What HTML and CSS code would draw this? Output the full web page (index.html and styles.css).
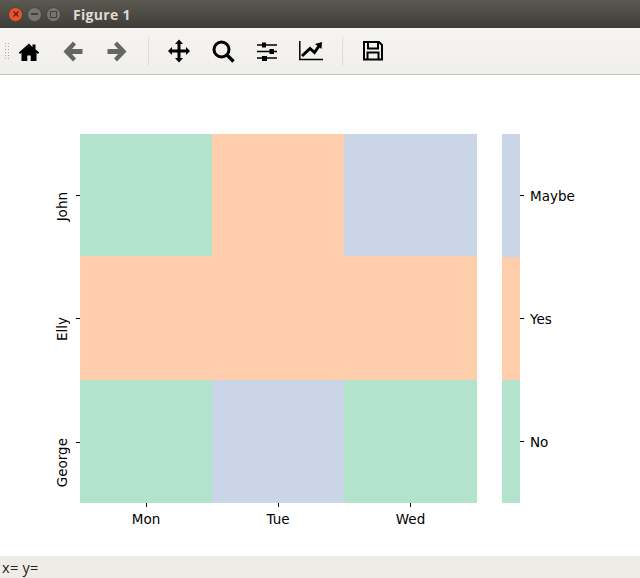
FILE: index.html
```html
<!DOCTYPE html>
<html lang="en">
<head>
  <meta charset="UTF-8" />
  <title>Figure 1</title>
  <link rel="stylesheet" href="styles.css">
</head>
<body>
  <header class="titlebar">
    <div class="win-btn close">
      <svg width="8" height="8" viewBox="0 0 8 8"><path d="M1.5 1.5l5 5M6.5 1.5l-5 5" stroke="#5a1c08" stroke-width="1.2"/></svg>
    </div>
    <div class="win-btn"><span class="dash"></span></div>
    <div class="win-btn"><span class="square"></span></div>
    <span class="title">Figure 1</span>
  </header>

  <div class="toolbar">
    <div class="grip"></div>
    <div class="tool">
      <svg width="24" height="24" viewBox="0 0 24 24"><path d="M12 4.500L1.800 13.500l1.300 1.400L4.500 13.700V22h5.800v-5.600h3.400V22h5.800v-8.300l1.400 1.200 1.300-1.400-3.700-3.300V5.500h-3v2.700z" fill="#000"/></svg>
    </div>
    <div class="tool">
      <svg width="24" height="24" viewBox="0 0 24 24"><path d="M12 2.500l3 3-4 4.500h10.500v5H11l4 4.500-3 3-9.500-10z" fill="#666"/></svg>
    </div>
    <div class="tool">
      <svg width="24" height="24" viewBox="0 0 24 24"><path d="M12 2.500l-3 3 4 4.500H2.500v5H13l-4 4.500 3 3 9.500-10z" fill="#666"/></svg>
    </div>
    <div class="sep"></div>
    <div class="tool">
      <svg width="24" height="24" viewBox="0 0 24 24"><path d="M12 0.500l4 4.500h-2.500v5.500H19V8l4 4-4 4v-2.500h-5.500V19H16l-4 4.500L8 19h2.500v-5.500H5V16l-4-4 4-4v2.500h5.500V5H8z" fill="#000"/></svg>
    </div>
    <div class="tool">
      <svg width="24" height="24" viewBox="0 0 24 24"><circle cx="10.500" cy="10.500" r="7.500" fill="none" stroke="#000" stroke-width="3"/><path d="M16 16l6.500 6.500" stroke="#000" stroke-width="3.400"/></svg>
    </div>
    <div class="tool">
      <svg width="24" height="24" viewBox="0 0 24 24"><path d="M2 6h20M2 12.500h20M2 19h20" stroke="#000" stroke-width="1.500"/><path d="M7 3.500h4v5H7zM14.500 10h4.500v5h-4.500zM7 17h5v5H7z" fill="#000"/></svg>
    </div>
    <div class="tool">
      <svg width="24" height="24" viewBox="0 0 24 24"><path d="M0.800 2v18.500H24" fill="none" stroke="#000" stroke-width="1.500"/><path d="M3 17l8-7.500 4.500 4 4.500-6.500" fill="none" stroke="#000" stroke-width="3"/><path d="M16 5l7-2-.500 7z" fill="#000"/></svg>
    </div>
    <div class="sep"></div>
    <div class="tool">
      <svg width="24" height="24" viewBox="0 0 24 24"><path d="M3 3h15l3 3v14.500H3z" fill="none" stroke="#000" stroke-width="2"/><path d="M7 3v6.500h10V3M6.500 20v-6.500h11V20" fill="none" stroke="#000" stroke-width="2"/></svg>
    </div>
  </div>

  <main class="figure">
    <div class="plot-row">
      <div class="y-axis">
        <div class="y-tick row-a"><span class="y-label">John</span><i class="tick-h"></i></div>
        <div class="y-tick row-b"><span class="y-label">Elly</span><i class="tick-h"></i></div>
        <div class="y-tick row-c"><span class="y-label">George</span><i class="tick-h"></i></div>
      </div>
      <div class="heatmap">
        <div class="green"></div><div class="orange"></div><div class="blue"></div>
        <div class="orange"></div><div class="orange"></div><div class="orange"></div>
        <div class="green"></div><div class="blue"></div><div class="green"></div>
      </div>
      <div class="colorbar">
        <div class="blue"></div>
        <div class="orange"></div>
        <div class="green"></div>
      </div>
      <div class="cbar-axis">
        <div class="cbar-tick"><i class="tick-h"></i><span>Maybe</span></div>
        <div class="cbar-tick"><i class="tick-h"></i><span>Yes</span></div>
        <div class="cbar-tick"><i class="tick-h"></i><span>No</span></div>
      </div>
    </div>
    <div class="x-axis">
      <div class="x-tick"><i class="tick-v"></i><span>Mon</span></div>
      <div class="x-tick"><i class="tick-v"></i><span>Tue</span></div>
      <div class="x-tick"><i class="tick-v"></i><span>Wed</span></div>
    </div>
  </main>

  <footer class="statusbar">x= y=</footer>
</body>
</html>
```

FILE: styles.css
```css
html, body {
  margin: 0;
  padding: 0;
}
body {
  width: 640px;
  height: 578px;
  display: flex;
  flex-direction: column;
  overflow: hidden;
  background-color: #fff;
  font-family: "DejaVu Sans", sans-serif;
}

/* window title */
.titlebar {
  height: 28px;
  flex: none;
  display: flex;
  align-items: center;
  padding-left: 8px;
  gap: 4px;
  background: linear-gradient(#5b5a52, #3d3c37);
  box-sizing: border-box;
}
.win-btn {
  width: 15px;
  height: 15px;
  border-radius: 50%;
  display: flex;
  align-items: center;
  justify-content: center;
  background: #75746d;
  border: 1px solid #45443f;
  box-sizing: border-box;
}
.win-btn.close {
  background: #e9552b;
}
.dash {
  width: 7px;
  height: 2px;
  background: #3f3e39;
}
.square {
  width: 5px;
  height: 5px;
  border: 1px solid #3f3e39;
}
.title {
  margin-left: 8px;
  color: #dfdbd2;
  font-family: "Open Sans", sans-serif;
  font-size: 14px;
  font-weight: 700;
  letter-spacing: 0.3px;
}

/* matplotlib toolbar */
.toolbar {
  height: 47px;
  flex: none;
  display: flex;
  align-items: center;
  padding-left: 7px;
  box-sizing: border-box;
  background: linear-gradient(#f6f4f1, #f1efeb);
  border-bottom: 1px solid #c4c2bd;
  position: relative;
}
.grip {
  position: absolute;
  left: 4px;
  top: 14px;
  width: 6px;
  height: 18px;
  background-image: radial-gradient(#a9a7a2 0.7px, transparent 0.8px);
  background-size: 3px 3px;
}
.tool {
  width: 44px;
  height: 24px;
  display: flex;
  justify-content: center;
}
.sep {
  width: 1px;
  height: 29px;
  margin: 0 8px 0 9px;
  background-color: #dedcd7;
}

/* plot area */
.figure {
  flex: 1;
  padding-top: 59px;
  background-color: #fff;
  color: #000;
  font-size: 13.5px;
}
.plot-row {
  display: flex;
  height: 369px;
}
.y-axis {
  width: 80px;
  flex: none;
  display: flex;
  flex-direction: column;
}
.y-tick {
  display: flex;
  justify-content: flex-end;
  align-items: flex-start;
  gap: 6px;
}
.row-a { height: 122px; }
.row-b { height: 124px; }
.row-c { height: 123px; }
.y-label {
  writing-mode: vertical-rl;
  transform: rotate(180deg);
}
.row-a .y-label { margin-top: 58px; }
.row-a .tick-h { margin-top: 61px; }
.row-b .y-label { margin-top: 61px; }
.row-b .tick-h { margin-top: 62px; }
.row-c .y-label { margin-top: 58px; }
.row-c .tick-h { margin-top: 62px; }
.tick-h {
  display: block;
  width: 4px;
  height: 1px;
  background-color: #000;
  flex: none;
}
.heatmap {
  width: 397px;
  flex: none;
  display: grid;
  grid-template-columns: 132px 132px 133px;
  grid-template-rows: 122px 124px 123px;
}
.colorbar {
  width: 18px;
  flex: none;
  margin-left: 25px;
  display: grid;
  grid-template-rows: 123px 123px 123px;
}
.cbar-axis {
  display: flex;
  flex-direction: column;
}
.cbar-tick {
  height: 123px;
  display: flex;
  align-items: center;
  gap: 6px;
}
.green { background-color: #b3e2cd; }
.orange { background-color: #fdcdac; }
.blue { background-color: #cbd5e8; }

.x-axis {
  margin-left: 80px;
  width: 397px;
  display: grid;
  grid-template-columns: 132px 132px 133px;
}
.x-tick {
  display: flex;
  flex-direction: column;
  align-items: center;
  gap: 4px;
}
.tick-v {
  display: block;
  width: 1px;
  height: 4px;
  background-color: #000;
}

.statusbar {
  height: 22px;
  flex: none;
  padding-left: 2px;
  box-sizing: border-box;
  background-color: #efece8;
  color: #222;
  font-family: "Open Sans", sans-serif;
  font-size: 14.5px;
  letter-spacing: 0.3px;
  line-height: 24px;
}
```
